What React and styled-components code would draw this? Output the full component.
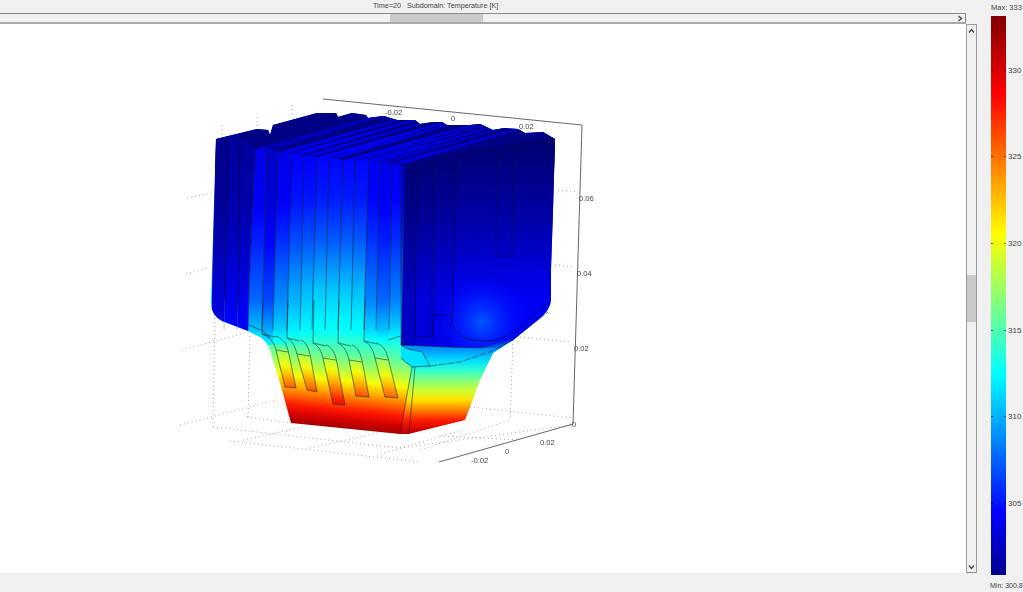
import React from 'react';
import styled, { createGlobalStyle } from 'styled-components';

const GlobalStyle = createGlobalStyle`
  html, body { margin: 0; padding: 0; background: #f0f0f0; }
  body { font-family: "Liberation Sans", Arial, sans-serif; overflow: hidden; }
`;

const Page = styled.div`
  width: 1023px;
  height: 592px;
  display: flex;
  overflow: hidden;
  background: #f0f0f0;
  color: #333;
`;
const Workspace = styled.div`
  width: 977px;
  display: flex;
  flex-direction: column;
`;
const Title = styled.div`
  height: 13px;
  line-height: 12px;
  font-size: 7.2px;
  white-space: pre;
  padding-left: 373px;
  color: #444;
`;
const HScroll = styled.div`
  width: 966px;
  height: 11px;
  box-sizing: border-box;
  display: flex;
  align-items: stretch;
  border-top: 1px solid #8a8a8a;
  border-bottom: 2px solid #a8a8a8;
  border-right: 1px solid #8a8a8a;
`;
const HThumb = styled.div`
  width: 93px;
  margin-left: 390px;
  background: #c9c9c9;
`;
const HArrow = styled.div`
  margin-left: auto;
  width: 11px;
  display: flex;
  align-items: center;
  justify-content: center;
`;
const PlotRow = styled.div`
  height: 549px;
  display: flex;
`;
const Plot = styled.svg`
  width: 966px;
  height: 549px;
  display: block;
  background: #fff;
  filter: blur(.3px);
`;
const VScroll = styled.div`
  width: 11px;
  box-sizing: border-box;
  display: flex;
  flex-direction: column;
  align-items: center;
  border: 1px solid #9a9a9a;
  border-bottom-color: #8a8a8a;
`;
const VArrow = styled.div`
  height: 11px;
  display: flex;
  align-items: center;
  margin-top: ${p => p.$top ? '0' : 'auto'};
`;
const VThumb = styled.div`
  width: 100%;
  height: 47px;
  margin-top: 239px;
  background: #c9c9c9;
`;
const Legend = styled.div`
  margin-left: 14px;
  display: flex;
  flex-direction: column;
  font-size: 7.5px;
  color: #444;
  white-space: nowrap;
`;
const Extreme = styled.div`
  height: ${p => p.$h}px;
  line-height: ${p => p.$lh}px;
  font-size: ${p => p.$size || 7.5}px;
  margin-left: ${p => p.$shift || 0}px;
`;
const ColorBar = styled.div`
  width: 15px;
  height: 559px;
  box-sizing: border-box;
  padding-top: 11px;
  background: linear-gradient(to top, #00008f 0%, #0000ff 11%, #00ffff 36%, #ffff00 61%, #ff0000 86%, #800000 100%);
`;
const Tick = styled.div`
  width: 15px;
  height: 86.6px;
  display: flex;
  align-items: center;
`;
const Mark = styled.i`
  flex: none;
  width: 2px;
  height: 1px;
  background: rgba(0, 0, 0, .55);
`;
const TickLabel = styled.span`
  flex: none;
  width: 0;
  text-indent: 2px;
  font-size: 8px;
`;
const Gap = styled.span`
  flex: 1;
`;

// colour map as used by the colour bar
const clamp = v => Math.round(Math.max(0, Math.min(1, v)) * 255);
const jet = t => `rgb(${clamp(Math.min(4 * t - 1.5, 4.5 - 4 * t))},${clamp(Math.min(4 * t - .5, 3.5 - 4 * t))},${clamp(Math.min(4 * t + .5, 2.5 - 4 * t))})`;

const lookup = table => y => {
  if (y <= table[0][0]) return table[0][1];
  for (let i = 1; i < table.length; i++) {
    const [y0, t0] = table[i - 1];
    const [y1, t1] = table[i];
    if (y <= y1) return t0 + (t1 - t0) * (y - y0) / (y1 - y0);
  }
  return table[table.length - 1][1];
};

// temperature against screen height, read off the body in the picture
const heat = lookup([[130, .11], [150, .125], [200, .15], [240, .21], [290, .31], [330, .375], [355, .47], [378, .6], [397, .75], [413, .875], [428, .97], [440, .98]]);
const frontHeat = lookup([[345, .24], [363, .36], [380, .5], [397, .625], [410, .75], [423, .875], [434, .95]]);
const panelHeat = lookup([[150, -.01], [220, .04], [300, .115]]);
const finHeat = y => heat(y > 345 ? y + 9 : y);

// the bottom edge falls to the right, so the heat bands lean with it
const LEAN = 'matrix(1 .102 0 1 0 -35)';

const Ramp = ({ id, fn, lean }) => {
  const stops = [];
  for (let y = 130; y <= 440; y += 10) stops.push(y);
  return (
    <linearGradient id={id} gradientUnits="userSpaceOnUse" x1="0" y1="130" x2="0" y2="440" gradientTransform={lean ? LEAN : undefined}>
      {stops.map(y => <stop key={y} offset={(y - 130) / 310} stopColor={jet(fn(y))} />)}
    </linearGradient>
  );
};

// x at the top of the fin block, top y, x at y=290, brightness, top value
const strips = [
  [216, 139, 212, .35, .015], [228, 136, 225, .38, .03], [240, 134, 238, .38, .03], [255, 149, 249, .62, .1],
  [267, 147, 263, .62, .07], [278, 152, 274, .8, .1], [292, 153, 288, .9, .12], [304, 155, 301, 1, .12],
  [317, 157, 313, 1.05, .125], [329, 157, 326, 1.05, .125], [343, 160, 339, 1.05, .125], [355, 160, 352, 1, .125],
  [369, 160, 365, .72, .11], [380, 161, 377, .62, .1], [392, 163, 390, .7, .11],
];
const stripEnds = [[405, 167, 401]];

const stripHeat = s => y => {
  const k = s[3] + (1 - s[3]) * Math.max(0, Math.min(1, (y - 300) / 45)) * (s[3] < .5 ? 0 : 1);
  return s[4] + Math.max(0, heat(y) - .125) * k;
};

const caps = [
  [255, 149, '#0000d8'], [267, 147, '#0000b8'], [278, 152, '#0000e8'], [292, 153, '#0000f8'], [304, 155, '#0000e0'],
  [317, 157, '#0000ff'], [329, 157, '#0000e8'], [343, 160, '#0000f0'], [355, 160, '#0000d8'], [369, 160, '#0000e8'],
  [380, 161, '#0000c8'], [392, 163, '#0000e0'],
];

const silhouette = 'M216 139 L257 129 L268 130 L270 135 L273 125 L317 113 L336 113 L338 117 L352 113 L366 115 L368 118 L384 116 L397 120 L415 120 L420 124 L433 122 L442 122 L447 125 L470 125 L480 124 L493 130 L505 128 L518 129 L525 133 L543 132 L555 139 L553 210 L551 270 L551 300 Q550 310 540 318 L513 340 L493 353 L480 380 L465 420 L408 434 L400 434 L291 423 L282 390 L270 350 Q266 340 260 337 L248 331 L222 321 Q211 315 211 303 Z';

// left/right x at the top, shoulder height, left/right x past the bend, tips
const fins = [
  { xl: 263, xr: 275, sy: 334, ml: 276, mr: 288, my: 350, tl: [285, 387], tr: [296, 388] },
  { xl: 288, xr: 301, sy: 338, ml: 297, mr: 310, my: 354, tl: [307, 390], tr: [317, 392] },
  { xl: 314, xr: 326, sy: 343, ml: 323, mr: 336, my: 358, tl: [333, 404], tr: [345, 405] },
  { xl: 339, xr: 352, sy: 343, ml: 349, mr: 362, my: 360, tl: [356, 396], tr: [369, 397] },
  { xl: 365, xr: 376, sy: 341, ml: 375, mr: 388, my: 358, tl: [385, 397], tr: [398, 398] },
];

const dotted = [
  'M187 198 L212 193', 'M186 274 L208 268', 'M182 350 L248 332', 'M180 425 L277 400',
  'M213 427 L215 313', 'M248 417 L250 333', 'M222 125 L222 135', 'M257 117 L257 128', 'M292 105 L292 114',
  'M213 427 L292 436 L400 448', 'M247 417 L292 423', 'M243 440 L303 427', 'M310 448 L400 428', 'M377 455 L462 430',
  'M230 441 L420 462', 'M470 407 L573 418', 'M513 340 L510 420', 'M520 337 L572 342', 'M558 190 L578 192',
  'M555 265 L575 267', 'M420 450 L510 420', 'M400 448 L572 425', 'M440 436 L520 440',
];

const axisText = [
  ['-0.02', 385, 115], ['0', 451, 121], ['0.02', 519, 129], ['0.06', 579, 201], ['0.04', 577, 276],
  ['0.02', 574, 351], ['0', 572, 427], ['0.02', 540, 445], ['0', 505, 454], ['-0.02', 471, 463],
];

const ChevronH = () => (
  <svg width="6" height="7" viewBox="0 0 6 7"><path d="M1.5 1 L4.5 3.5 L1.5 6" fill="none" stroke="#444" strokeWidth="1.3" /></svg>
);
const ChevronV = ({ up }) => (
  <svg width="7" height="6" viewBox="0 0 7 6"><path d={up ? 'M1 4.5 L3.5 1.5 L6 4.5' : 'M1 1.5 L3.5 4.5 L6 1.5'} fill="none" stroke="#444" strokeWidth="1.3" /></svg>
);

const Heatsink = () => (
  <g>
    <defs>
      <clipPath id="body"><path d={silhouette} /></clipPath>
      <Ramp id="base" fn={heat} lean />
      <Ramp id="fin" fn={finHeat} lean />
      <Ramp id="front" fn={frontHeat} />
      <Ramp id="panel" fn={panelHeat} />
      {strips.map((s, i) => <Ramp key={i} id={`strip${i}`} fn={stripHeat(s)} />)}
      <radialGradient id="glow" gradientUnits="userSpaceOnUse" cx="482" cy="322" r="50">
        <stop offset="0" stopColor="#0058ff" />
        <stop offset="1" stopColor="#0000ff" stopOpacity="0" />
      </radialGradient>
    </defs>

    <g clipPath="url(#body)">
      <rect x="200" y="100" width="370" height="345" fill="url(#base)" />
      <rect x="200" y="100" width="370" height="70" fill="#000084" />

      {caps.map(([x, y, c], i) => (
        <polygon key={i} points={`${x},${y} ${x + 130},${y - 36} ${x + 142},${y - 38} ${x + 12},${y + 1}`} fill={c} stroke="#00006a" strokeWidth=".25" />
      ))}

      {strips.map((s, i) => {
        const next = strips[i + 1] || stripEnds[0];
        return (
          <polygon key={i} fill={`url(#strip${i})`}
            points={`${s[0]},${s[1]} ${next[0]},${next[1]} ${next[2]},290 ${next[2] - 1},345 ${s[2] - 1},345 ${s[2]},290`} />
        );
      })}

      <polygon points="401,335 560,300 540,360 480,380 465,420 408,434 400,434 412,367 401,358" fill="url(#front)" />
      <polygon points="405,167 468,152 560,136 560,312 513,340 480,348 447,347 401,345" fill="url(#panel)" />
      <polygon points="401,168 417,167 415,345 401,345" fill="#000050" opacity=".3" />
      <polygon points="417,167 433,165 432,347 415,345" fill="#000050" opacity=".16" />
      <polygon points="433,165 457,160 452,347 432,347" fill="#000050" opacity=".1" />
      <rect x="430" y="270" width="110" height="78" fill="url(#glow)" />

      {fins.map((f, i) => (
        <polygon key={i} fill="url(#fin)" points={`${f.ml},${f.my} ${f.mr},${f.my} ${f.tr[0]},${f.tr[1]} ${f.tl[0]},${f.tl[1]}`} />
      ))}

      <path d="M401 345 Q408 350 413 350 L422 352 L430 366 L412 367 Q405 362 401 358 Z" fill="#00e4ff" />
    </g>

    <g fill="none" stroke="#12202a" strokeWidth=".7" strokeOpacity=".8">
      {strips.slice(1).map((s, i) => (
        <path key={i} d={`M${s[0]} ${s[1]} L${s[2]} 290 L${s[2] - 1} 330`} strokeOpacity={i < 2 ? .35 : .8} />
      ))}
      {fins.map((f, i) => (
        <g key={i}>
          <path d={`M${f.xl} 300 L${f.xl - 1} ${f.sy} L${f.xl + 12} ${f.sy + 3} M${f.xl - 1} ${f.sy} Q${f.ml - 3} ${f.sy + 3} ${f.ml} ${f.my} L${f.tl[0]} ${f.tl[1]} L${f.tr[0]} ${f.tr[1]} L${f.mr} ${f.my} Q${f.mr - 3} ${f.sy + 4} ${f.xr} ${f.sy + 2}`} />
          <path d={`M${f.ml} ${f.my} L${f.mr} ${f.my + 2}`} />
        </g>
      ))}
      <path d="M249 325 L263 331 L270 338" />
      <path d="M401 167 L401 345 Q406 350 413 350 L422 352 L430 366 L412 367 Q405 362 401 358" />
      <path d="M412 367 L400 434 M415 367 L409 434" />
      <path d="M430 366 L460 362 L490 352 L513 340" strokeDasharray="7 1.5" />
      <path d="M401 345 L447 347 L480 348 Q497 346 513 340 L548 312" strokeDasharray="14 1.5" />
      <path d="M388 340 L401 336" />
    </g>

    <g fill="none" stroke="#00004e" strokeWidth=".8" strokeOpacity=".85">
      <path d="M405 167 L468 152 L555 139" />
      <path d="M417 167 L415 337 L433 337 L433 315 L453 315 M433 165 L432 337 M457 160 L452 325 Q458 338 473 340 L493 341 Q510 336 523 325 L551 300" />
      <path d="M497 155 L496 256 L512 256 L513 150" />
      <path d="M228 136 L225 300 M240 134 L238 310" />
    </g>
  </g>
);

const Chart = () => (
  <Plot viewBox="0 24 966 549">
    <g fill="none" stroke="#8f8f8f" strokeWidth=".8" strokeDasharray="1 3">
      {dotted.map(d => <path key={d} d={d} />)}
    </g>
    <Heatsink />
    <path d="M323 99 L582 125 L573 424 L439 462" fill="none" stroke="#555" strokeWidth=".9" />
    <g fontFamily="'Liberation Sans', Arial, sans-serif" fontSize="7.6" fill="#444">
      {axisText.map(([t, x, y]) => <text key={t + x} x={x} y={y}>{t}</text>)}
    </g>
  </Plot>
);

const ticks = [330, 325, 320, 315, 310, 305];

export default function App() {
  return (
    <Page>
      <GlobalStyle />
      <Workspace>
        <Title>Time=20   Subdomain: Temperature [K]</Title>
        <HScroll>
          <HThumb />
          <HArrow><ChevronH /></HArrow>
        </HScroll>
        <PlotRow>
          <Chart />
          <VScroll>
            <VArrow $top><ChevronV up /></VArrow>
            <VThumb />
            <VArrow><ChevronV /></VArrow>
          </VScroll>
        </PlotRow>
      </Workspace>
      <Legend>
        <Extreme $h={16} $lh={15}>Max: 333</Extreme>
        <ColorBar>
          {ticks.map(v => (
            <Tick key={v}>
              <Mark /><Gap /><Mark />
              <TickLabel>{v}</TickLabel>
            </Tick>
          ))}
        </ColorBar>
        <Extreme $h={17} $lh={22} $size={7} $shift={-1}>Min: 300.8</Extreme>
      </Legend>
    </Page>
  );
}
